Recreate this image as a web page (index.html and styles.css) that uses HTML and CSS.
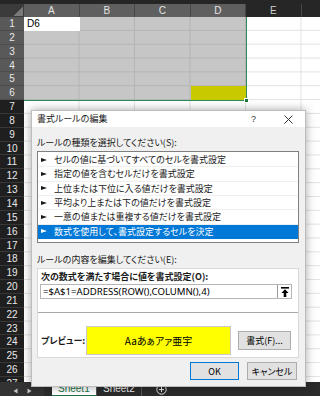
FILE: index.html
```html
<!DOCTYPE html>
<html lang="ja">
<head>
    <meta charset="UTF-8">
    <title>書式ルールの編集</title>
    <link rel="stylesheet" href="styles.css">
</head>
<body>
<div class="app">
    <div class="topbar"></div>
    <div class="sheet">
        <div class="corner"><span></span></div>
        <div class="colHeads">
            <div class="ch sel">A</div>
            <div class="ch sel">B</div>
            <div class="ch sel">C</div>
            <div class="ch sel">D</div>
            <div class="ch">E</div>
            <div class="ch"></div>
        </div>
        <div class="rowHeads">
            <div class="rh sel">1</div><div class="rh sel">2</div><div class="rh sel">3</div>
            <div class="rh sel">4</div><div class="rh sel">5</div><div class="rh sel">6</div>
            <div class="rh">7</div><div class="rh">8</div><div class="rh">9</div>
            <div class="rh">10</div><div class="rh">11</div><div class="rh">12</div>
            <div class="rh">13</div><div class="rh">14</div><div class="rh">15</div>
            <div class="rh">16</div><div class="rh">17</div><div class="rh">18</div>
            <div class="rh">19</div><div class="rh">20</div><div class="rh">21</div>
            <div class="rh">22</div><div class="rh">23</div><div class="rh">24</div>
            <div class="rh">25</div><div class="rh">26</div><div class="rh">27</div>
        </div>
        <div class="cells">
            <div class="selection">
                <div class="cellA1">D6</div>
                <div class="cellD6"></div>
                <span class="handle"></span>
            </div>
        </div>
    </div>
    <div class="tabbar">
        <div class="tabNav">
            <svg width="5" height="6" viewBox="0 0 5 6"><path d="M4.5 0.5v5L0.5 3z" fill="#c8c8c8"/></svg>
            <svg width="5" height="6" viewBox="0 0 5 6"><path d="M0.5 0.5v5L4.5 3z" fill="#c8c8c8"/></svg>
        </div>
        <div class="tab active">Sheet1</div>
        <div class="tab">Sheet2</div>
        <div class="addTab">
            <svg width="11" height="11" viewBox="0 0 11 11"><circle cx="5.5" cy="5.5" r="4.7" fill="none" stroke="#e6e6e6" stroke-width="1"/><path d="M5.5 3v5M3 5.5h5" stroke="#e6e6e6" stroke-width="1"/></svg>
        </div>
    </div>

    <div class="dialog">
        <div class="dlgTitle">
            <span>書式ルールの編集</span>
            <span class="help">?</span>
            <span class="close">
                <svg width="9" height="9" viewBox="0 0 9 9"><path d="M0.5 0.5l8 8M8.5 0.5l-8 8" stroke="#333" stroke-width="1"/></svg>
            </span>
        </div>
        <div class="dlgBody">
            <p class="lbl first">ルールの種類を選択してください(<u>S</u>):</p>
            <ul class="ruleList">
                <li>セルの値に基づいてすべてのセルを書式設定</li>
                <li>指定の値を含むセルだけを書式設定</li>
                <li>上位または下位に入る値だけを書式設定</li>
                <li>平均より上または下の値だけを書式設定</li>
                <li>一意の値または重複する値だけを書式設定</li>
                <li class="selected">数式を使用して、書式設定するセルを決定</li>
            </ul>
            <p class="lbl second">ルールの内容を編集してください(<u>E</u>):</p>
            <div class="ruleBox">
                <p class="boxLbl">次の数式を満たす場合に値を書式設定(<u>O</u>):</p>
                <div class="formula">
                    <span class="formulaText">=$A$1=ADDRESS(ROW(),COLUMN(),4)</span>
                    <span class="refBtn">
                        <svg width="8" height="10" viewBox="0 0 8 10"><rect x="0" y="0" width="8" height="1.6" fill="#000"/><path d="M4 2.2L7.6 6H5.3v4H2.7V6H0.4z" fill="#000"/></svg>
                    </span>
                </div>
                <div class="sep"></div>
                <div class="previewRow">
                    <span class="boxLbl prevLbl">プレビュー:</span>
                    <div class="preview">Aaあぁアァ亜宇</div>
                    <button class="btn fmtBtn">書式(<u>F</u>)...</button>
                </div>
            </div>
            <div class="dlgButtons">
                <button class="btn ok">OK</button>
                <button class="btn">キャンセル</button>
            </div>
        </div>
    </div>
</div>
</body>
</html>
```

FILE: styles.css
```css
*{
    box-sizing: border-box;
    margin: 0;
    padding: 0;
}
html, body{
    width: 320px;
    height: 396px;
    overflow: hidden;
    background: #fff;
    font-family: "Noto Sans CJK JP", sans-serif;
}
.app{
    position: relative;
    width: 320px;
    height: 396px;
    display: flex;
    flex-direction: column;
    overflow: hidden;
}
.topbar{
    flex: none;
    height: 4px;
    background: #262626;
}

/* sheet grid */
.sheet{
    flex: 1;
    min-height: 0;
    display: grid;
    grid-template-columns: 24px 1fr;
    grid-template-rows: 13px 1fr;
    overflow: hidden;
}
.corner{
    background: #3b3b3b;
    display: flex;
    align-items: flex-end;
    justify-content: flex-end;
    padding: 0 1px 1px 0;
}
.corner span{
    width: 10px;
    height: 9px;
    background: linear-gradient(to bottom right, transparent 50%, #7a7a7a 50%);
}
.colHeads{
    display: flex;
    background: #262626;
    overflow: hidden;
}
.ch{
    flex: none;
    width: 55.5px;
    border-right: 1px solid #474747;
    color: #cfcfcf;
    font: 10px/13px "Liberation Sans", sans-serif;
    text-align: center;
}
.ch.sel{
    background: #5f5f5f;
    color: #e4e4e4;
}
.rowHeads{
    display: flex;
    flex-direction: column;
    background: #1f1f1f;
    overflow: hidden;
}
.rh{
    flex: none;
    height: 13.85px;
    border-bottom: 1px solid #383838;
    color: #e8e8e8;
    font: 10px/13px "Liberation Sans", sans-serif;
    text-align: center;
}
.rh.sel{
    background: #595959;
    border-bottom-color: #4c4c4c;
}
.cells{
    overflow: hidden;
    background-color: #fff;
    background-image: linear-gradient(to right, #e2e2e2 1px, transparent 1px), linear-gradient(to bottom, #e2e2e2 1px, transparent 1px);
    background-size: 55.5px 13.85px;
    background-position: -1px -1px;
}
.selection{
    position: relative;
    width: 222px;
    height: 83.1px;
    display: grid;
    grid-template-columns: repeat(4, 55.5px);
    grid-template-rows: repeat(6, 13.85px);
    background-color: #c6c6c6;
    background-image: linear-gradient(to right, #b4b4b4 1px, transparent 1px), linear-gradient(to bottom, #b4b4b4 1px, transparent 1px);
    background-size: 55.5px 13.85px;
    background-position: -1px -1px;
    outline: 1px solid #2e8b5e;
}
.cellA1{
    grid-column: 1;
    grid-row: 1;
    background: #fff;
    color: #000;
    font: 10px/13.85px "Liberation Sans", sans-serif;
    padding-left: 3px;
}
.cellD6{
    grid-column: 4;
    grid-row: 6;
    background: #c9c900;
}
.handle{
    position: absolute;
    right: -3px;
    bottom: -3px;
    width: 5px;
    height: 5px;
    background: #217346;
    border: 1px solid #fff;
}

/* sheet tabs */
.tabbar{
    flex: none;
    height: 14px;
    display: flex;
    align-items: stretch;
    background: #2b2b2b;
    font: 10px/14px "Liberation Sans", sans-serif;
}
.tabNav{
    width: 44px;
    display: flex;
    align-items: center;
    gap: 9px;
    padding: 4px 0 0 13px;
    background: #333;
}
.tab{
    width: 45px;
    padding-left: 6px;
    color: #f0f0f0;
    border-right: 1px solid #555;
}
.tab.active{
    margin-left: 8px;
    background: #fff;
    color: #217346;
    border-bottom: 1px solid #217346;
}
.addTab{
    display: flex;
    align-items: center;
    padding-left: 14px;
}

/* dialog */
.dialog{
    position: absolute;
    left: 31px;
    top: 110px;
    width: 275px;
    height: 277px;
    background: #f0f0f0;
    border: 1px solid #bdbdbd;
    box-shadow: 0 0 9px rgba(0, 0, 0, 0.35);
    font-size: 9px;
    font-feature-settings: "palt";
    color: #1a1a1a;
}
.dlgTitle{
    height: 16px;
    display: flex;
    align-items: center;
    padding-left: 5px;
    background: #fff;
    line-height: 16px;
}
.help{
    margin-left: auto;
    font: 9px "Liberation Sans", sans-serif;
    color: #333;
}
.close{
    display: flex;
    margin: 0 12px 0 28px;
}
.dlgBody{
    padding: 0 6px 0 5px;
}
.lbl{
    line-height: 12px;
}
.lbl.first{
    margin-top: 10px;
}
.lbl.second{
    margin-top: 11px;
}
u{
    text-decoration: none;
}
.ruleList{
    list-style: none;
    margin-top: 2px;
    height: 92px;
    padding: 1px 0 3px 0;
    background: #fff;
    border: 1px solid #7f7f7f;
}
.ruleList li{
    height: 14.33px;
    display: flex;
    align-items: center;
    padding-left: 3px;
    border-bottom: 1px solid #efefef;
    white-space: nowrap;
}
.ruleList li::before{
    content: "";
    width: 0;
    height: 0;
    margin-right: 7px;
    border-left: 6px solid #1a1a1a;
    border-top: 2.5px solid transparent;
    border-bottom: 2.5px solid transparent;
}
.ruleList li.selected{
    background: #0078d7;
    color: #fff;
    border-bottom-color: #0078d7;
}
.ruleList li.selected::before{
    border-left-color: #fff;
}
.ruleBox{
    margin-top: 2px;
    height: 90px;
    background: #fff;
    border: 1px solid #d9d9d9;
}
.boxLbl{
    display: block;
    font-weight: bold;
    line-height: 12px;
    padding: 2px 0 0 3px;
}
.formula{
    margin: 1px 6px 0 2px;
    height: 15px;
    display: flex;
    align-items: center;
    border: 1px solid #b5b5b5;
}
.formulaText{
    flex: 1;
    padding-left: 2px;
    font: 9.6px/13px "Noto Sans", sans-serif;
    color: #000;
}
.refBtn{
    width: 14px;
    height: 13px;
    display: flex;
    align-items: center;
    justify-content: center;
    border-left: 1px solid #9a9a9a;
}
.sep{
    margin-top: 13px;
    height: 1px;
    background: #a8a8a8;
}
.previewRow{
    margin-top: 13px;
    display: flex;
    align-items: center;
}
.prevLbl{
    width: 48px;
    padding: 0 0 0 3px;
}
.preview{
    width: 145px;
    height: 29px;
    background: #ffff00;
    border: 1px solid #c8c8c8;
    text-align: center;
    line-height: 27px;
    font-size: 10px;
    color: #000;
}
.btn{
    font-family: "Noto Sans CJK JP", sans-serif;
    font-feature-settings: "palt";
    font-size: 9px;
    color: #000;
    background: #e1e1e1;
    border: 1px solid #adadad;
}
.fmtBtn{
    margin-left: 7px;
    width: 53px;
    height: 19px;
}
.dlgButtons{
    margin-top: 4px;
    padding-right: 2px;
    display: flex;
    justify-content: flex-end;
    gap: 8px;
}
.dlgButtons .btn{
    width: 50px;
    height: 18px;
}
.dlgButtons .ok{
    width: 49px;
    border-color: #0078d7;
}
```
